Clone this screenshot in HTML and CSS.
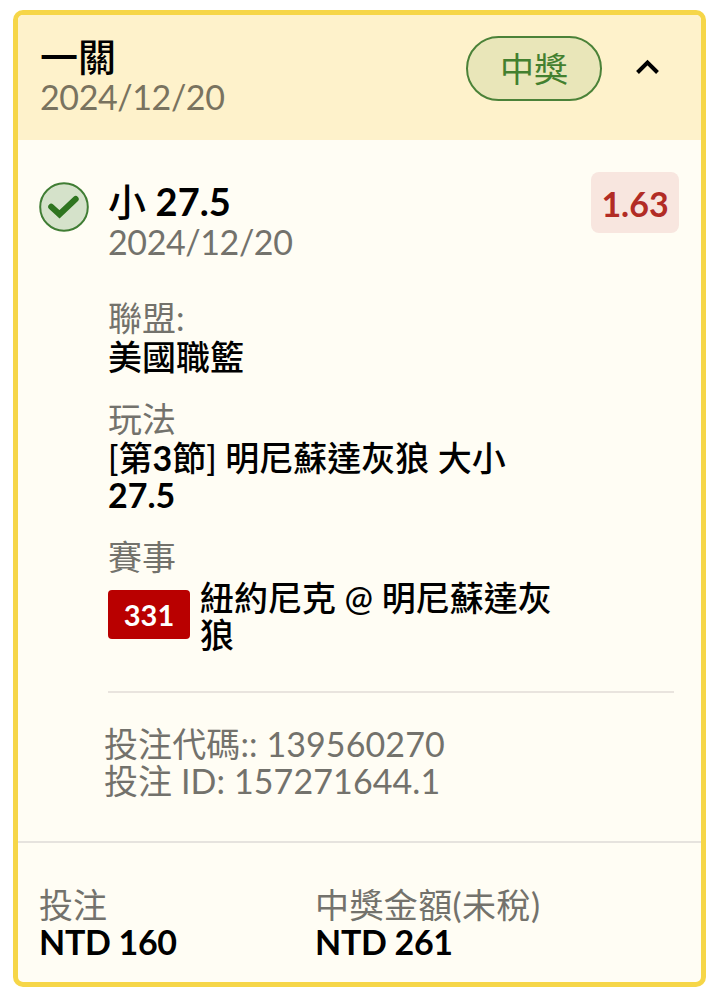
FILE: index.html
```html
<!DOCTYPE html>
<html lang="zh-Hant">
<head>
    <meta charset="UTF-8">
    <meta name="viewport" content="width=device-width, initial-scale=1.0">
    <title>投注紀錄</title>
    <link rel="stylesheet" href="styles.css">
</head>
<body>

    <div class="ticket">
        <div class="ticket-header">
            <div>
                <h1>一關</h1>
                <div class="date">2024/12/20</div>
            </div>
            <span class="status">中獎</span>
            <svg class="chevron" width="26" height="18" viewBox="0 0 26 18">
                <path d="M2.5 14.5 L12.5 4.5 L22.5 14.5" fill="none" stroke="#000" stroke-width="4"/>
            </svg>
        </div>

        <div class="bet">
            <svg class="check" width="50" height="50" viewBox="0 0 50 50">
                <circle cx="25" cy="25" r="23.8" fill="#d5e2ca" stroke="#407d34" stroke-width="2"/>
                <path d="M12.2 24.8 L20.5 32.3 L36.7 17" fill="none" stroke="#2f7520" stroke-width="6" stroke-linecap="round"/>
            </svg>

            <div class="bet-info">
                <div class="bet-top">
                    <div>
                        <h2>小 <b>27.5</b></h2>
                        <div class="date">2024/12/20</div>
                    </div>
                    <span class="odds">1.63</span>
                </div>

                <div class="group">
                    <div class="label">聯盟:</div>
                    <div class="value">美國職籃</div>
                </div>
                <div class="group">
                    <div class="label">玩法</div>
                    <div class="value">[第<b>3</b>節] 明尼蘇達灰狼 大小 <b>27.5</b></div>
                </div>
                <div class="group">
                    <div class="label">賽事</div>
                    <div class="event">
                        <span class="event-no">331</span>
                        <div class="value">紐約尼克 @ 明尼蘇達灰狼</div>
                    </div>
                </div>

                <div class="codes">
                    <div>投注代碼:: 139560270</div>
                    <div>投注 ID: 157271644.1</div>
                </div>
            </div>
        </div>

        <div class="ticket-footer">
            <div class="stake">
                <div class="footer-label">投注</div>
                <div class="amount">NTD 160</div>
            </div>
            <div>
                <div class="footer-label win-label">中獎金額(未稅)</div>
                <div class="amount">NTD 261</div>
            </div>
        </div>
    </div>

</body>
</html>
```
FILE: styles.css
```css
* {
    box-sizing: border-box;
}

body {
    margin: 0;
    padding: 10px 13px 0 13px;
    background-color: #ffffff;
    font-family: Lato, "Noto Sans CJK TC", sans-serif;
    font-size: 34px;
    line-height: 37px;
    color: #000;
}

b {
    font-weight: 700;
}

.ticket {
    width: 693px;
    height: 977px;
    border: 5px solid #f6d648;
    border-radius: 10px;
    background-color: #fffdf4;
    overflow: hidden;
}

.ticket-header {
    display: flex;
    align-items: flex-start;
    height: 125px;
    padding: 20px 40px 0 22px;
    background-color: #fef2cb;
}

h1, h2 {
    margin: 0;
    font-size: 38px;
    font-weight: 500;
    line-height: 43px;
}

h2 {
    position: relative;
    top: 1px;
}

.date {
    color: #73726c;
    letter-spacing: -0.4px;
}

.ticket-header .date {
    color: #79735f;
}

.status {
    width: 136px;
    height: 65px;
    margin: 1px 33px 0 auto;
    border: 2px solid #4b8238;
    border-radius: 33px;
    background-color: #e9e6b9;
    color: #43802f;
    line-height: 61px;
    text-align: center;
}

.chevron {
    margin-top: 23px;
}

.bet {
    display: flex;
    height: 701px;
    padding: 39px 27px 0 21px;
}

.check {
    flex-shrink: 0;
    margin: 3px 19px 0 0;
}

.bet-info {
    flex: 1;
}

.bet-top {
    display: flex;
    justify-content: space-between;
    margin-bottom: 37px;
    margin-right: -5px;
}

.bet-top .date {
    padding-top: 1px;
}

.odds {
    width: 88px;
    height: 61px;
    margin-top: -7px;
    border-radius: 8px;
    background-color: #f8e6df;
    color: #b22c25;
    font-weight: 700;
    line-height: 63px;
    text-align: center;
}

.group {
    margin-bottom: 23px;
}

.label {
    color: #73726c;
    line-height: 41px;
}

.value {
    max-width: 420px;
    font-weight: 500;
}

.event {
    display: flex;
    align-items: center;
    padding-top: 2px;
}

.event .value {
    max-width: 360px;
}

.event-no {
    width: 82px;
    height: 49px;
    margin: 0 10px 3px 0;
    border-radius: 4px;
    background-color: #b90000;
    color: #fff;
    font-size: 29px;
    font-weight: 700;
    line-height: 50px;
    text-align: center;
}

.codes {
    margin-top: 38px;
    padding-top: 32px;
    border-top: 2px solid #e9e4de;
    color: #73726c;
}

.codes div {
    margin-left: -4px;
    letter-spacing: 0.1px;
}

.ticket-footer {
    display: flex;
    padding: 43px 21px 0;
    border-top: 2px solid #e6e3de;
}

.stake {
    width: 276px;
}

.footer-label {
    color: #73726c;
}

.win-label {
    letter-spacing: 0.4px;
}

.amount {
    font-weight: 700;
    letter-spacing: -0.3px;
}
```
